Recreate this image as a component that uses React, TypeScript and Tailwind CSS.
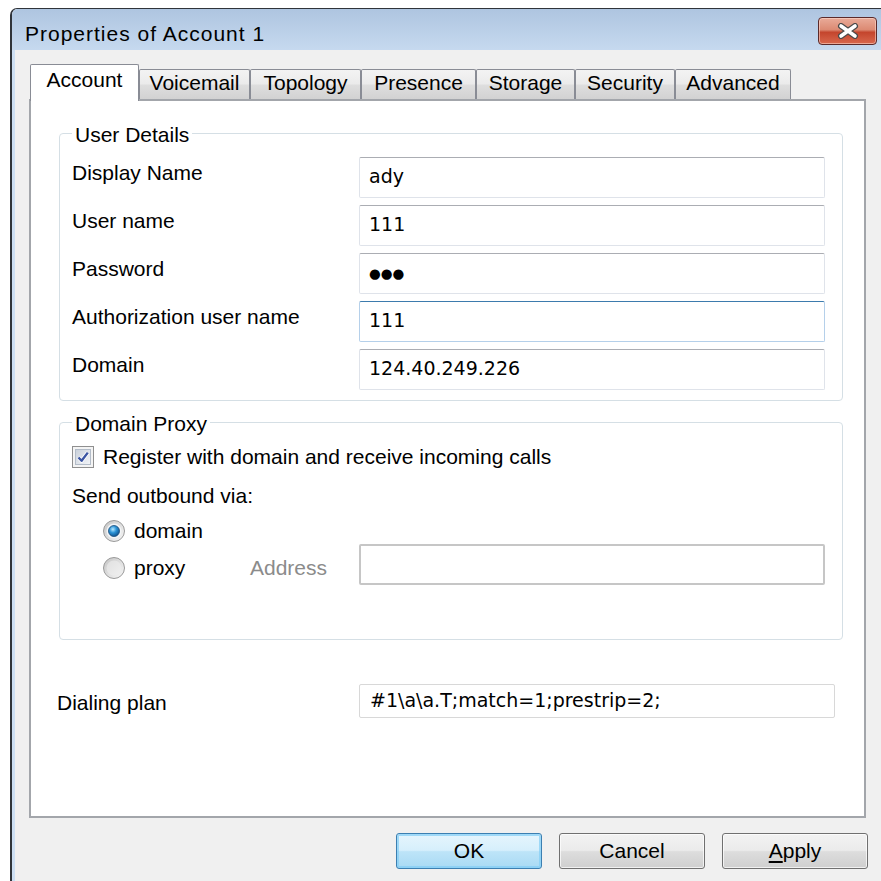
import React from 'react'

const sans = "font-['Liberation_Sans',Arial,sans-serif]"
const field = "font-['DejaVu_Sans',Verdana,sans-serif]"

const tabs = [
  { name: 'Account', w: 'w-[109px]' },
  { name: 'Voicemail', w: 'w-[111px]' },
  { name: 'Topology', w: 'w-[111px]' },
  { name: 'Presence', w: 'w-[115px]' },
  { name: 'Storage', w: 'w-[99px]' },
  { name: 'Security', w: 'w-[100px]' },
  { name: 'Advanced', w: 'w-[116px]' },
]

const details = [
  { label: 'Display Name', value: 'ady' },
  { label: 'User name', value: '111' },
  { label: 'Password', value: '●●●', secret: true },
  { label: 'Authorization user name', value: '111', focused: true },
  { label: 'Domain', value: '124.40.249.226' },
]

const CloseButton = () => (
  <div className="mt-[8px] flex h-[28px] w-[59px] items-center justify-center rounded-[4px] border border-[#5b2a2a] bg-[linear-gradient(to_bottom,#e9ab99_0%,#dc8a73_45%,#c4452d_55%,#d8684e_100%)] shadow-[inset_0_0_0_1px_rgba(255,220,210,0.55)]">
    <svg width="22" height="16" viewBox="0 0 22 16">
      <path d="M4 3 L18 13 M18 3 L4 13" stroke="#4a4a4a" strokeWidth="6" strokeLinecap="round" />
      <path d="M4 3 L18 13 M18 3 L4 13" stroke="#ffffff" strokeWidth="3.6" strokeLinecap="round" />
    </svg>
  </div>
)

const Checkbox = () => (
  <svg width="22" height="22" viewBox="0 0 22 22" className="shrink-0">
    <defs>
      <linearGradient id="cb-fill" x1="0" y1="0" x2="1" y2="1">
        <stop offset="0" stopColor="#c9d0da" />
        <stop offset="1" stopColor="#f3f5f8" />
      </linearGradient>
    </defs>
    <rect x="0.5" y="0.5" width="21" height="21" fill="#f4f4f4" stroke="#8f8f8f" />
    <rect x="3.5" y="3.5" width="15" height="15" fill="url(#cb-fill)" stroke="#b3bcc8" />
    <path d="M6.5 11.5 L9.6 14.8 L15.8 6.6" fill="none" stroke="#ffffff" strokeWidth="4" strokeLinejoin="round" />
    <path d="M6.5 11.5 L9.6 14.8 L15.8 6.6" fill="none" stroke="#3b55a3" strokeWidth="2.4" strokeLinejoin="round" />
  </svg>
)

const Radio = ({ checked }: { checked?: boolean }) => (
  <svg width="24" height="24" viewBox="0 0 24 24" className="shrink-0">
    <defs>
      <linearGradient id={checked ? 'rd-ring-on' : 'rd-ring-off'} x1="0" y1="0" x2="1" y2="1">
        <stop offset="0" stopColor="#c4c4c4" />
        <stop offset="1" stopColor="#f8f8f8" />
      </linearGradient>
      <radialGradient id="rd-dot" cx="0.4" cy="0.35" r="0.7">
        <stop offset="0" stopColor="#b6e8ff" />
        <stop offset="0.45" stopColor="#2c93d6" />
        <stop offset="1" stopColor="#0d4e88" />
      </radialGradient>
    </defs>
    <circle cx="12" cy="12" r="10.5" fill={checked ? 'url(#rd-ring-on)' : 'url(#rd-ring-off)'} stroke="#9a9a9a" />
    {checked ? (
      <>
        <circle cx="12" cy="12" r="7.5" fill="#f2f4f6" />
        <circle cx="12" cy="12" r="5.5" fill="url(#rd-dot)" stroke="#1b4c7a" strokeWidth="0.8" />
      </>
    ) : (
      <circle cx="12" cy="12" r="7.5" fill="#eeeeee" opacity="0.6" />
    )}
  </svg>
)

const TextBox = ({ children, focused }: { children: React.ReactNode; focused?: boolean }) => (
  <div
    className={`flex h-[41px] flex-1 items-center rounded-[2px] border bg-white pb-[3px] pl-[9px] text-[19px] text-black ${field} ${
      focused ? 'border-[#b5d0ea] border-t-[#3d7bad]' : 'border-[#dfe3ea] border-t-[#abadb3]'
    }`}
  >
    {children}
  </div>
)

const Button = ({ children, primary }: { children: React.ReactNode; primary?: boolean }) => (
  <button
    className={`flex h-[36px] w-[146px] items-center justify-center rounded-[3px] border text-[21px] text-black ${sans} ${
      primary
        ? 'border-[#3c7fb1] bg-[linear-gradient(to_bottom,#e6f5fd_0%,#d6effc_48%,#bde4f8_52%,#a9daf4_100%)] shadow-[inset_0_0_0_2px_rgba(130,205,245,0.7)]'
        : 'border-[#707070] bg-[linear-gradient(to_bottom,#f2f2f2_0%,#ebebeb_48%,#dddddd_52%,#cfcfcf_100%)] shadow-[inset_0_0_0_1px_rgba(255,255,255,0.7)]'
    }`}
  >
    {children}
  </button>
)

export default function App() {
  return (
    <div className="h-[881px] w-[881px] overflow-hidden bg-white pl-[10px] pt-[8px]">
      <div className={`flex h-[900px] flex-col overflow-hidden rounded-tl-[7px] border-l-2 border-t border-[#30343a] ${sans}`}>
        {/* title bar */}
        <div className="flex h-[41px] shrink-0 items-start justify-between bg-[linear-gradient(to_bottom,#aec5e0,#c6d9ef)] pl-[13px] pr-[4px]">
          <span className="pt-[13px] text-[21px] leading-[24px] tracking-[1px] text-black">Properties of Account 1</span>
          <CloseButton />
        </div>

        {/* dialog body */}
        <div className="flex flex-1 flex-col border-l-[3px] border-[#cddff3] bg-[#f0f0f0] pl-[14px] pr-[15px] pt-[14px]">
          <div className="flex items-end pl-[1px]">
            {tabs.map((t, i) =>
              i === 0 ? (
                <div
                  key={t.name}
                  className={`relative z-10 -mb-[2px] h-[37px] ${t.w} rounded-t-[2px] border border-b-0 border-[#898c95] bg-white pt-[3px] text-center text-[21px] leading-[24px] text-black`}
                >
                  {t.name}
                </div>
              ) : (
                <div
                  key={t.name}
                  className={`h-[30px] ${t.w} rounded-t-[2px] border border-b-0 border-[#898c95] bg-[linear-gradient(to_bottom,#f3f3f3_0%,#ebebeb_48%,#dedede_52%,#d2d2d2_100%)] pt-[1px] text-center text-[21px] leading-[24px] text-black`}
                >
                  {t.name}
                </div>
              )
            )}
          </div>

          {/* tab page */}
          <div className="flex h-[719px] flex-col border-2 border-[#a3a6ab] bg-white">
            <fieldset className="ml-[28px] mr-[21px] mt-[20px] rounded-[4px] border border-[#d5dfe5] pb-[10px] pl-[12px] pr-[17px] pt-[11px]">
              <legend className="px-[3px] pt-[3px] text-[21px] leading-[22px] text-black">User Details</legend>
              <div className="flex flex-col gap-[7px]">
                {details.map((d) => (
                  <div key={d.label} className="flex items-start">
                    <span className="w-[287px] pt-[4px] text-[21px] leading-[24px] text-black">{d.label}</span>
                    <TextBox focused={d.focused}>
                      {d.secret ? <span className="pt-[3px] text-[13.5px] leading-none">{d.value}</span> : d.value}
                    </TextBox>
                  </div>
                ))}
              </div>
            </fieldset>

            <fieldset className="ml-[28px] mr-[21px] mt-[9px] rounded-[4px] border border-[#d5dfe5] pb-[54px] pl-[12px] pr-[17px] pt-[10px] text-[21px] leading-[24px] text-black">
              <legend className="px-[3px] pt-[3px] leading-[22px]">Domain Proxy</legend>
              <label className="flex h-[24px] items-center gap-[9px]">
                <Checkbox />
                <span>Register with domain and receive incoming calls</span>
              </label>
              <div className="mt-[15px]">Send outbound via:</div>
              <div className="ml-[30px] mt-[11px] flex h-[24px] items-center gap-[8px]">
                <Radio checked />
                <span>domain</span>
              </div>
              <div className="mt-[1px] flex items-start">
                <div className="flex w-[287px] items-center pt-[12px]">
                  <div className="ml-[30px] flex w-[148px] items-center gap-[8px]">
                    <Radio />
                    <span>proxy</span>
                  </div>
                  <span className="text-[#8b8b8b]">Address</span>
                </div>
                <div className="h-[41px] flex-1 rounded-[2px] border-2 border-[#c6c6c6] bg-white" />
              </div>
            </fieldset>

            <div className="mt-[44px] flex items-start pl-[26px] pr-[29px]">
              <span className="w-[302px] pt-[7px] text-[21px] leading-[24px] text-black">Dialing plan</span>
              <div className={`flex h-[34px] flex-1 items-center rounded-[2px] border border-[#d8d8d8] bg-white pb-[2px] pl-[10px] text-[19px] text-black ${field}`}>
                #1\a\a.T;match=1;prestrip=2;
              </div>
            </div>
          </div>

          {/* dialog buttons */}
          <div className="-mr-[2px] mt-[15px] flex justify-end gap-[17px]">
            <Button primary>OK</Button>
            <Button>Cancel</Button>
            <Button>
              <span className="underline underline-offset-[3px]">A</span>pply
            </Button>
          </div>
        </div>
      </div>
    </div>
  )
}
